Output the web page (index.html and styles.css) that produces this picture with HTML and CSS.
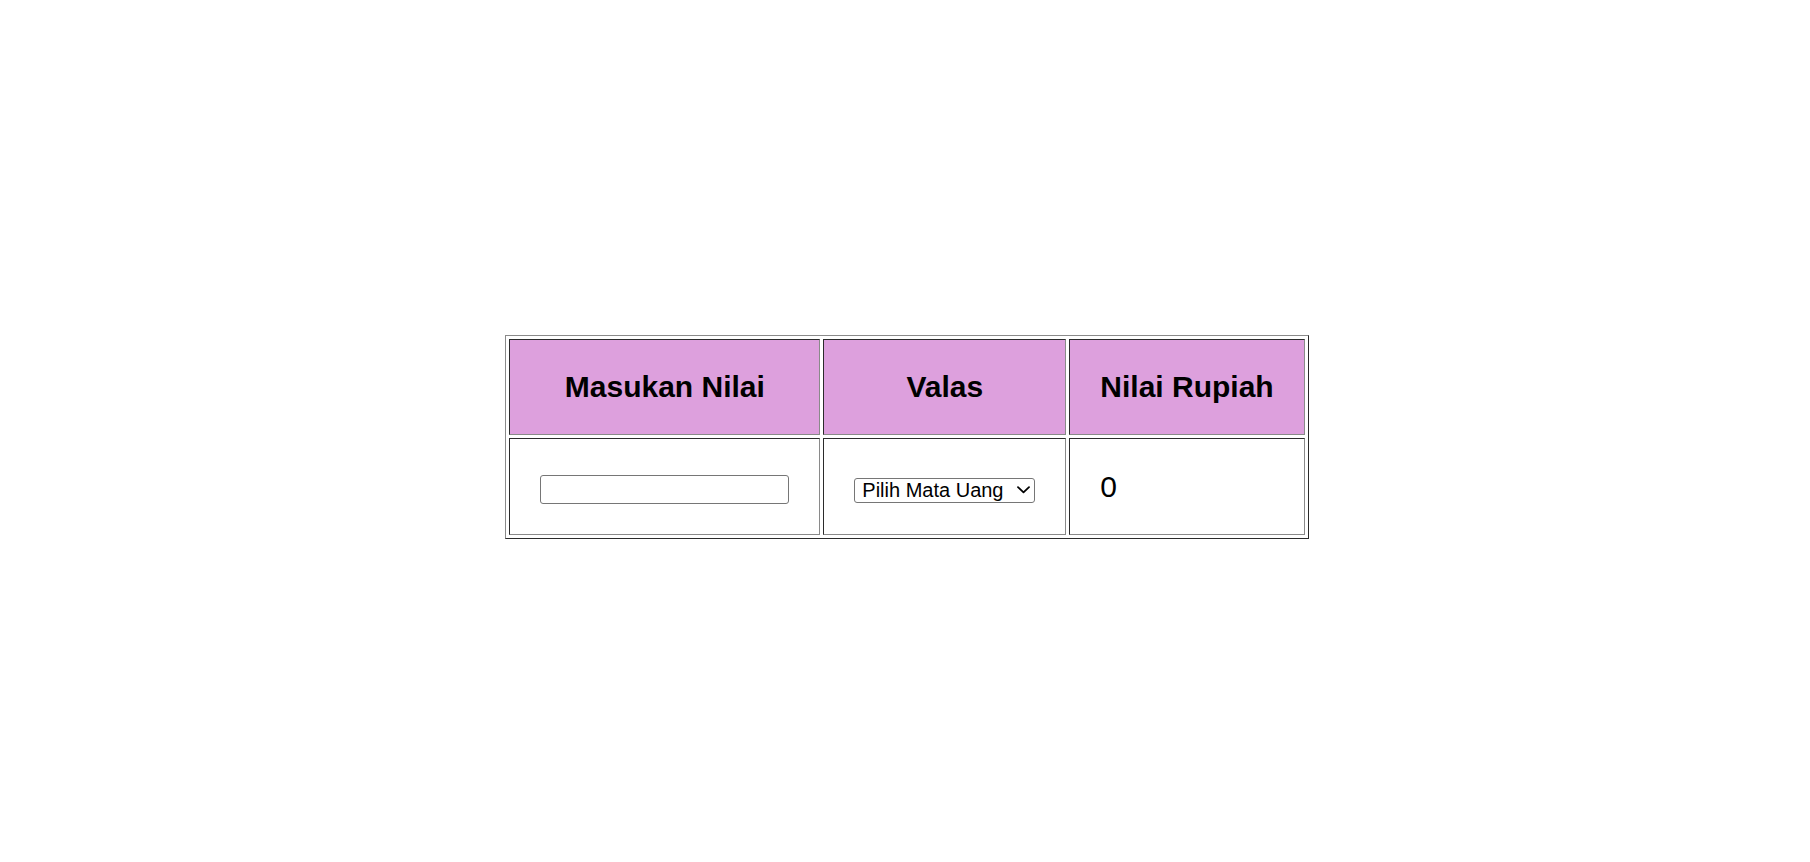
FILE: index.html
```html
<!DOCTYPE html>
<html lang="id">
<head>
<meta charset="utf-8">
<title>Konversi Valas</title>
<link rel="stylesheet" href="styles.css">
</head>
<body>
<div class="page">
  <table class="converter">
    <thead>
      <tr>
        <th class="head">Masukan Nilai</th>
        <th class="head">Valas</th>
        <th class="head">Nilai Rupiah</th>
      </tr>
    </thead>
    <tbody>
      <tr>
        <td class="cell center"><input class="amount" type="text"></td>
        <td class="cell center">
          <span class="select-wrap">
            <select class="currency">
              <option>Pilih Mata Uang</option>
              <option>USD</option>
              <option>EUR</option>
              <option>SGD</option>
            </select>
            <svg class="chevron" width="13" height="8" viewBox="0 0 13 8" aria-hidden="true">
              <path d="M1 1.2 L6.5 6.4 L12 1.2" fill="none" stroke="#000" stroke-width="1.8" stroke-linecap="round" stroke-linejoin="round"/>
            </svg>
          </span>
        </td>
        <td class="cell result">0</td>
      </tr>
    </tbody>
  </table>
</div>
</body>
</html>
```

FILE: styles.css
```css
html, body {
  margin: 0;
  padding: 0;
  background: #ffffff;
}

body {
  font-family: "Liberation Sans", Arial, sans-serif;
  color: #000000;
}

.page {
  display: flex;
  justify-content: center;
  padding-top: 335px;
  padding-left: 4px;
}

.converter {
  border-collapse: separate;
  border-spacing: 3px;
  border-width: 1px;
  border-style: solid;
  border-color: #8a8a8a #2b2b2b #2b2b2b #8a8a8a;
}

.head,
.cell {
  padding: 30px;
  font-size: 30px;
  line-height: normal;
  border-width: 1px;
  border-style: solid;
  border-color: #2b2b2b #8a8a8a #8a8a8a #2b2b2b;
  vertical-align: middle;
}

.head {
  background: #dda0dd;
  font-weight: bold;
  text-align: center;
}

.center {
  text-align: center;
}

.result {
  text-align: left;
}

.amount {
  box-sizing: border-box;
  width: 249px;
  height: 29px;
  padding: 1px 3px;
  border: 1px solid #767676;
  border-radius: 3px;
  font-family: "Liberation Sans", Arial, sans-serif;
  font-size: 20px;
  background: #ffffff;
  margin: 0;
}

.select-wrap {
  position: relative;
  display: inline-flex;
  vertical-align: baseline;
}

.currency {
  -webkit-appearance: none;
  appearance: none;
  box-sizing: border-box;
  width: 181px;
  height: 25px;
  padding: 0 24px 0 7px;
  border: 1px solid #767676;
  border-radius: 3px;
  font-family: "Liberation Sans", Arial, sans-serif;
  font-size: 20px;
  line-height: 23px;
  color: #000000;
  background-color: #ffffff;
  margin: 0;
}

.chevron {
  position: absolute;
  right: 5px;
  top: 8px;
  pointer-events: none;
}
```
